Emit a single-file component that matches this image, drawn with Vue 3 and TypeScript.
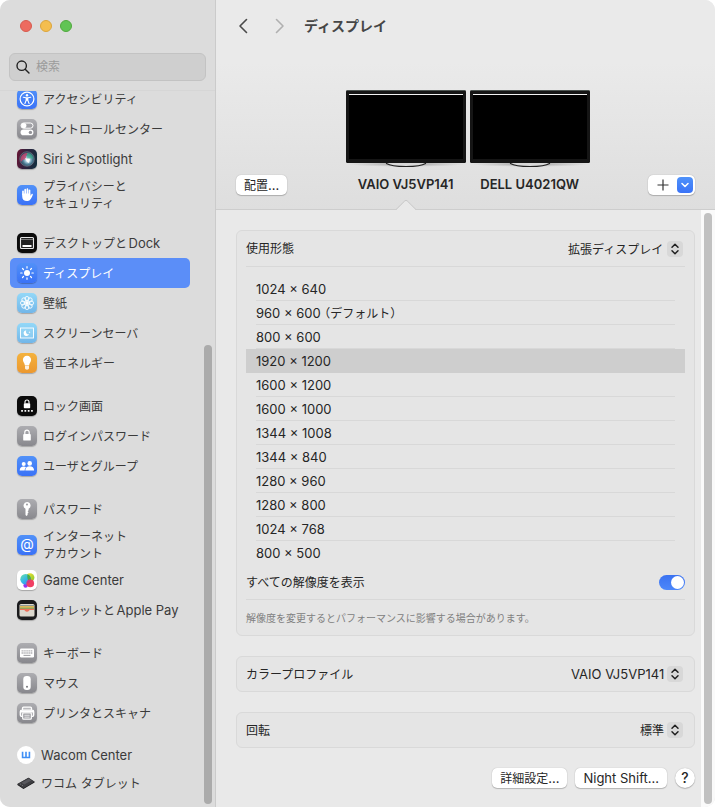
<script setup lang="ts">
import { ref } from 'vue'

interface Run {
  text: string
  japanese: boolean
}

interface NavItem {
  icon: string
  tile: string
  lines: string[]
  small?: boolean
}

const groups: NavItem[][] = [
  [
    { icon: 'access', tile: 'blue', lines: ['アクセシビリティ'] },
    { icon: 'control', tile: 'gray', lines: ['コントロールセンター'] },
    { icon: 'siri', tile: 'siri', lines: ['SiriとSpotlight'] },
    { icon: 'hand', tile: 'blue', lines: ['プライバシーと', 'セキュリティ'] },
  ],
  [
    { icon: 'dock', tile: 'black', lines: ['デスクトップとDock'] },
    { icon: 'display', tile: 'blue', lines: ['ディスプレイ'] },
    { icon: 'wallpaper', tile: 'sky', lines: ['壁紙'] },
    { icon: 'saver', tile: 'sky', lines: ['スクリーンセーバ'] },
    { icon: 'energy', tile: 'orange', lines: ['省エネルギー'] },
  ],
  [
    { icon: 'lockscreen', tile: 'black', lines: ['ロック画面'] },
    { icon: 'login', tile: 'gray', lines: ['ログインパスワード'] },
    { icon: 'users', tile: 'blue', lines: ['ユーザとグループ'] },
  ],
  [
    { icon: 'key', tile: 'gray', lines: ['パスワード'] },
    { icon: 'internet', tile: 'blue', lines: ['インターネット', 'アカウント'] },
    { icon: 'game', tile: 'white', lines: ['Game Center'] },
    { icon: 'wallet', tile: 'wallet', lines: ['ウォレットとApple Pay'] },
  ],
  [
    { icon: 'keyboard', tile: 'gray', lines: ['キーボード'] },
    { icon: 'mouse', tile: 'gray', lines: ['マウス'] },
    { icon: 'printer', tile: 'gray', lines: ['プリンタとスキャナ'] },
  ],
  [
    { icon: 'wacom', tile: 'round', lines: ['Wacom Center'], small: true },
    { icon: 'tablet', tile: 'bare', lines: ['ワコム タブレット'], small: true },
  ],
]

const glyphs: Record<string, string> = {
  access:
    '<circle cx="10" cy="10" r="6.9" fill="none" stroke="#fff" stroke-width="1.2"/><circle cx="10" cy="6.200" r="1.200" fill="#fff"/><path d="M6.300 8.300l2.700.500h2l2.700-.500M9.200 9v2.300l-1.300 3.300M10.800 9v2.300l1.300 3.300M10 9v2.300" fill="none" stroke="#fff" stroke-width="1.100" stroke-linecap="round" stroke-linejoin="round"/>',
  control:
    '<rect x="4" y="4" width="12" height="5.2" rx="2.6" fill="none" stroke="#fff" stroke-width="1"/><circle cx="6.8" cy="6.6" r="2.6" fill="#fff"/><rect x="3.6" y="10.6" width="12.8" height="5.6" rx="2.8" fill="#fff"/><circle cx="13.4" cy="13.4" r="1.7" fill="#929297"/>',
  siri:
    '<defs><radialGradient id="orb" cx=".55" cy=".55" r=".55"><stop offset="0" stop-color="#fff"/><stop offset=".25" stop-color="#b8d8e8"/><stop offset=".6" stop-color="#4b7b92"/><stop offset="1" stop-color="#283a50"/></radialGradient></defs><circle cx="10" cy="10" r="7.3" fill="url(#orb)" stroke="#8b8f9a" stroke-width=".5"/><path d="M3.600 9c1-4 5-5.500 8-4.700C9 6 8 8 10 10c-3 0-5 1-6 3-.6-1-.7-2.500-.4-4z" fill="#d1436d" opacity=".75"/><path d="M10 4c4-.5 6.500 3 6 6-2-1-4-1-6 0 .5-2 0-4 0-6z" fill="#37b08a" opacity=".65"/><path d="M8 9l5 1-1 4-2-1z" fill="#fff" opacity=".9"/>',
  hand:
    '<path d="M6 9.500V6.300M8.200 9V4.700M10.400 9V4.200M12.500 9.500V5.300" stroke="#fff" stroke-width="1.700" stroke-linecap="round"/><path d="M5.200 8.500h8.100v2.300l1.200-1.600c.5-.7 1.600-.2 1.300.6-.7 1.900-1.500 3.700-2.700 5-1 1-1.900 1.300-3.200 1.300-2.800 0-4.700-1.700-4.700-4.600z" fill="#fff"/>',
  dock:
    '<rect x="3.500" y="4.500" width="13" height="11" rx="1" fill="#222" stroke="#e6e6e6" stroke-width="1.100"/><path d="M4 6.500h12" stroke="#999" stroke-width=".7"/><rect x="5.500" y="12" width="9" height="2" fill="#fff"/>',
  display:
    '<circle cx="10" cy="10" r="3" fill="#fff"/><path d="M10 3.700v1.400M10 14.900v1.400M3.700 10h1.400M14.900 10h1.400M5.500 5.500l1 1M13.500 13.500l1 1M5.500 14.500l1-1M13.500 6.500l1-1" stroke="#fff" stroke-width="1.200" stroke-linecap="round"/>',
  wallpaper:
    '<g fill="none" stroke="#fff" stroke-width=".9"><circle cx="10" cy="5.600" r="2.100"/><circle cx="13.100" cy="6.900" r="2.100"/><circle cx="14.400" cy="10" r="2.100"/><circle cx="13.100" cy="13.100" r="2.100"/><circle cx="10" cy="14.400" r="2.100"/><circle cx="6.900" cy="13.100" r="2.100"/><circle cx="5.600" cy="10" r="2.100"/><circle cx="6.900" cy="6.900" r="2.100"/></g><circle cx="10" cy="10" r="1.900" fill="#fff"/>',
  saver:
    '<rect x="3.500" y="5" width="13" height="10" fill="#a5dcf6" fill-opacity=".4" stroke="#fff" stroke-width=".9"/><path d="M9.300 7.200a2.900 2.900 0 1 0 2.800 4.100 2.700 2.700 0 0 1-2.800-4.100z" fill="#fff"/><path d="M12.500 8l.3.900.9.300-.9.300-.3.900-.3-.9-.9-.3.900-.3z" fill="#fff"/>',
  energy:
    '<path d="M10 2.800c-2.500 0-4.100 1.800-4.100 4 0 2.300 1.700 3.100 2 5.700h4.200c.3-2.600 2-3.400 2-5.700 0-2.200-1.600-4-4.100-4z" fill="#fff"/><path d="M8 13h4v2c0 1-.8 1.700-2 1.700S8 16 8 15z" fill="#fff" opacity=".85"/>',
  lockscreen:
    '<rect x="6.800" y="7.300" width="6.400" height="5" rx=".8" fill="#fff"/><path d="M8 7.500V6a2 2 0 0 1 4 0v1.500" fill="none" stroke="#fff" stroke-width="1.100"/><path d="M4.200 14.800h1.700M7.500 14.800h1.700M10.800 14.800h1.700M14.100 14.800h1.700" stroke="#fff" stroke-width="1.700"/>',
  login:
    '<rect x="6.200" y="8" width="7.600" height="6.600" rx=".9" fill="#fff"/><path d="M7.800 8.500V6.300a2.200 2.200 0 0 1 4.400 0v2.200" fill="none" stroke="#fff" stroke-width="1.200"/>',
  users:
    '<circle cx="6.700" cy="7.900" r="2" fill="#fff"/><path d="M2.700 14.400c0-2.600 1.600-4 4-4 1 0 1.800.3 2.400.8-1 .9-1.400 2-1.400 3.200z" fill="#fff"/><circle cx="12.700" cy="7.400" r="2.300" fill="#fff"/><path d="M8.300 14.500c0-2.700 1.800-4.200 4.400-4.200s4.400 1.500 4.400 4.200z" fill="#fff"/>',
  key:
    '<path fill-rule="evenodd" d="M10 3a3.600 3.600 0 0 1 1.600 6.800v1.500l-1 1 1 1-1 1.200v1.500l-1.100.9-1-1V9.800A3.600 3.600 0 0 1 10 3zm0 1.400a1.100 1.100 0 1 0 0 2.200 1.100 1.100 0 0 0 0-2.200z" fill="#fff"/>',
  internet:
    '<text x="10" y="14.200" text-anchor="middle" font-family="Inter, sans-serif" font-size="14" fill="#fff">@</text>',
  game:
    '<defs><linearGradient id="g1" x2=".8" y2="1"><stop stop-color="#6be5a3"/><stop offset=".55" stop-color="#37b8e8"/><stop offset="1" stop-color="#3f86ee"/></linearGradient><linearGradient id="g2" y2="1"><stop stop-color="#ffe52d"/><stop offset="1" stop-color="#7fc62f"/></linearGradient></defs><circle cx="13" cy="7.600" r="4.400" fill="url(#g2)"/><circle cx="8.600" cy="15.600" r="2.200" fill="#9a32ee"/><circle cx="8.600" cy="9.200" r="5.300" fill="url(#g1)"/><path d="M10.500 4.300c2 .6 3.400 2.600 3.400 4.900 0 1.400-.5 2.600-1.300 3.500-1.700-2-2.900-5-2.100-8.400z" fill="#47ad4c"/><circle cx="13.300" cy="13.400" r="3.800" fill="#f13f63"/><path d="M9.600 12.500c.6-1.500 2-2.800 3.800-2.900-.2 2-1.600 3.600-3.800 3.900z" fill="#c83c91"/>',
  wallet:
    '<rect x="2.500" y="4" width="15" height="12.500" rx="1.500" fill="#dcd8ce"/><path d="M3 5h14v1.600H3z" fill="#8d9a94"/><path d="M3 6.300h14v1.400H3z" fill="#f5b53a"/><path d="M3 7.600h14v1.300H3z" fill="#6cae52"/><path d="M3 8.800h14v1.200h-4c-1 0-1.300 1.800-3 1.800S8 10 7 10H3z" fill="#ee705a"/>',
  keyboard:
    '<rect x="3" y="5.500" width="14" height="9" rx="1.300" fill="#fff"/><path d="M4.600 7.800h10.800M4.600 10h10.800" stroke="#a5a5a9" stroke-width="1.300" stroke-dasharray="1.200 .7"/><path d="M6.500 12.400h7" stroke="#a5a5a9" stroke-width="1.100"/>',
  mouse:
    '<rect x="6.300" y="3" width="7.400" height="14" rx="3.300" fill="#fff"/><circle cx="10" cy="13.700" r="1" fill="#77777b"/>',
  printer:
    '<path d="M5.500 7V5.200c0-.6.400-1 1-1h7c.6 0 1 .4 1 1V7M5.600 13.300H4.500c-.7 0-1.200-.5-1.200-1.200V8.800c0-.9.700-1.600 1.600-1.600h10.200c.9 0 1.600.7 1.600 1.600v3.300c0 .7-.5 1.200-1.200 1.200h-1.100" fill="#fff" fill-opacity=".25" stroke="#fff" stroke-width="1.300"/><path d="M3.500 7.500h13v2h-13z" fill="#fff"/><rect x="5.700" y="10" width="8.600" height="6.200" rx=".8" fill="#929297" stroke="#fff" stroke-width="1.200"/><path d="M7.300 12.200h5.400M7.300 14.100h5.400" stroke="#fff" stroke-width=".9"/>',
  wacom:
    '<path d="M6.200 6.500v6.300h7.600V6.500M10 6.500v6.300" fill="none" stroke="#3f8ff5" stroke-width="1.800"/>',
  tablet:
    '<path d="M.5 11.200L12.800 4.300l6.700 4.200v1L7.200 16.800.5 12.200z" fill="#19191b"/><path d="M.5 11.200L12.800 4.300l6.700 4.200L7.200 15.700z" fill="#3e3e42"/><path d="M5 9.600l8-4.400 3 2-8 4.500z" fill="#58585d"/><path d="M3.500 11l1 .7M5.500 12.400l1 .6" stroke="#9a9a9f" stroke-width=".7"/>',
}

const displays = ['VAIO VJ5VP141', 'DELL U4021QW']
const activeDisplay = ref(0)
const activeItem = ref('display')

const resolutions = [
  '1024 × 640',
  '960 × 600 （デフォルト）',
  '800 × 600',
  '1920 × 1200',
  '1600 × 1200',
  '1600 × 1000',
  '1344 × 1008',
  '1344 × 840',
  '1280 × 960',
  '1280 × 800',
  '1024 × 768',
  '800 × 500',
]
const resolution = ref('1920 × 1200')
const showAll = ref(true)

/** Splits a label into Latin and Japanese runs, which are set at different sizes. */
function runs(label: string): Run[] {
  const parts = label.match(/[\u0000-\u00ff]+|[^\u0000-\u00ff]+/g) ?? []
  return parts.map((text) => ({ text, japanese: text.charCodeAt(0) > 0xff }))
}
</script>

<template>
  <div class="window">
    <aside class="sidebar">
      <div class="lights">
        <button class="light close" type="button" aria-label="閉じる"></button>
        <button class="light minimise" type="button" aria-label="しまう"></button>
        <button class="light zoom" type="button" aria-label="拡大"></button>
      </div>
      <label class="search">
        <svg width="14" height="14" viewBox="0 0 14 14" fill="none" stroke="#222" stroke-width="1.4" stroke-linecap="round">
          <circle cx="5.700" cy="5.700" r="4.700" />
          <path d="M9.200 9.200L13 13" />
        </svg>
        <input class="ja" type="search" placeholder="検索" aria-label="検索" />
      </label>
      <div class="scroller">
        <nav class="nav">
          <ul v-for="(group, g) in groups" :key="g" class="group">
            <li v-for="item in group" :key="item.icon">
              <a
                href="#"
                class="item"
                :class="{ active: item.icon === activeItem, double: item.lines.length > 1, small: item.small }"
                @click.prevent="activeItem = item.icon"
              >
                <span class="tile" :class="item.tile">
                  <svg viewBox="0 0 20 20" aria-hidden="true" v-html="glyphs[item.icon]"></svg>
                </span>
                <span class="label">
                  <span v-for="line in item.lines" :key="line" class="line">
                    <span v-for="(run, r) in runs(line)" :key="r" :class="{ ja: run.japanese }">{{ run.text }}</span>
                  </span>
                </span>
              </a>
            </li>
          </ul>
        </nav>
        <div class="side-bar-track"><div class="thumb"></div></div>
      </div>
    </aside>

    <main class="main">
      <header class="header">
        <div class="titlebar">
          <button class="arrow" type="button" aria-label="戻る">
            <svg width="10" height="16" viewBox="0 0 10 16"><path d="M8.500 1.500L2 8l6.500 6.500" fill="none" stroke="#4a4a4a" stroke-width="1.600" stroke-linecap="round" stroke-linejoin="round" /></svg>
          </button>
          <button class="arrow" type="button" aria-label="進む" disabled>
            <svg width="10" height="16" viewBox="0 0 10 16"><path d="M1.500 1.500L8 8l-6.500 6.500" fill="none" stroke="#b0b0b0" stroke-width="1.600" stroke-linecap="round" stroke-linejoin="round" /></svg>
          </button>
          <h1>ディスプレイ</h1>
        </div>
        <div class="arrangement">
          <button class="push" type="button"><span class="ja">配置</span>...</button>
          <div class="displays">
            <button
              v-for="(name, i) in displays"
              :key="name"
              type="button"
              class="display"
              :class="{ current: i === activeDisplay }"
              @click="activeDisplay = i"
            >
              <svg class="monitor" width="120" height="80" viewBox="0 0 120 80" aria-hidden="true">
                <defs>
                  <radialGradient id="shade"><stop stop-color="#777" stop-opacity=".7" /><stop offset="1" stop-color="#999" stop-opacity="0" /></radialGradient>
                </defs>
                <ellipse cx="60" cy="74" rx="60" ry="3" fill="url(#shade)" />
                <path d="M40.500 72v1.500c3 2 10 3 19.500 3s16.500-1 19.500-3V72" fill="#d8d8d8" stroke="#222" stroke-width="1.200" />
                <rect width="120" height="73" rx="1.500" fill="#151515" />
                <path d="M1 .5h118" stroke="#4e5552" />
                <rect x="3" y="4" width="114" height="65" fill="#000" />
                <path d="M3 4.500h114" stroke="#f2f2f2" />
              </svg>
              <span class="name">{{ name }}</span>
              <svg v-if="i === activeDisplay" class="notch" width="20" height="10" viewBox="0 0 20 10" aria-hidden="true">
                <path d="M0 10L8.800.8q1.200-1 2.400 0L20 10z" fill="#e9e9e9" />
                <path d="M0 9.600L8.800.9q1.200-1 2.400 0L20 9.600" fill="none" stroke="#c6c6c6" />
              </svg>
            </button>
          </div>
          <button class="push add" type="button" aria-label="追加">
            <svg width="12" height="12" viewBox="0 0 12 12"><path d="M6 .5v11M.5 6h11" stroke="#333" stroke-width="1.200" /></svg>
            <span class="chevron">
              <svg width="8" height="6" viewBox="0 0 8 6"><path d="M1 1.500l3 3 3-3" fill="none" stroke="#fff" stroke-width="1.500" stroke-linecap="round" stroke-linejoin="round" /></svg>
            </span>
          </button>
        </div>
      </header>

      <div class="body">
        <div class="content">
          <section class="card">
            <div class="row tall">
              <label for="usage"><span class="ja">使用形態</span></label>
              <span class="popup">
                <select id="usage" class="ja"><option>拡張ディスプレイ</option></select>
                <svg class="updown" viewBox="0 0 16 16" aria-hidden="true"><path d="M5 6.300l3-3 3 3M5 9.700l3 3 3-3" /></svg>
              </span>
            </div>
            <ul class="resolutions" aria-label="解像度">
              <li v-for="value in resolutions" :key="value">
                <button
                  type="button"
                  class="resolution"
                  :class="{ chosen: value === resolution }"
                  :aria-pressed="value === resolution"
                  @click="resolution = value"
                >
                  <span class="rule"><span v-for="(run, r) in runs(value)" :key="r" :class="{ ja: run.japanese }">{{ run.text }}</span></span>
                </button>
              </li>
            </ul>
            <div class="row">
              <label for="all"><span class="ja">すべての解像度を表示</span></label>
              <input id="all" v-model="showAll" class="switch" type="checkbox" role="switch" />
            </div>
            <p class="note">解像度を変更するとパフォーマンスに影響する場合があります。</p>
          </section>

          <section class="card">
            <div class="row">
              <label for="profile"><span class="ja">カラープロファイル</span></label>
              <span class="popup">
                <select id="profile"><option>VAIO VJ5VP141</option></select>
                <svg class="updown" viewBox="0 0 16 16" aria-hidden="true"><path d="M5 6.300l3-3 3 3M5 9.700l3 3 3-3" /></svg>
              </span>
            </div>
          </section>

          <section class="card">
            <div class="row">
              <label for="rotation"><span class="ja">回転</span></label>
              <span class="popup">
                <select id="rotation" class="ja"><option>標準</option></select>
                <svg class="updown" viewBox="0 0 16 16" aria-hidden="true"><path d="M5 6.300l3-3 3 3M5 9.700l3 3 3-3" /></svg>
              </span>
            </div>
          </section>

          <div class="actions">
            <button class="push" type="button"><span class="ja">詳細設定</span>...</button>
            <button class="push" type="button">Night Shift...</button>
            <button class="push help" type="button">?</button>
          </div>
        </div>
        <div class="main-track"><div class="thumb"></div></div>
      </div>
    </main>
  </div>
</template>

<style>
body {
  background: #fff;
}
</style>

<style scoped>
* {
  box-sizing: border-box;
}

.window {
  display: grid;
  grid-template-columns: 216px minmax(0, 1fr);
  min-height: 100vh;
  overflow: hidden;
  border-radius: 10px;
  background: #e9e9e9;
  color: #262626;
  font: 13px/16px Inter, "Noto Sans CJK JP", sans-serif;
}

button,
input,
select {
  margin: 0;
  padding: 0;
  border: 0;
  background: none;
  color: inherit;
  font: inherit;
}

ul,
p,
h1 {
  margin: 0;
  padding: 0;
  list-style: none;
}

.ja {
  font-size: 12px;
}

/* Sidebar */
.sidebar {
  display: flex;
  flex-direction: column;
  border-right: 1px solid #cbcbcb;
  background: #dcdcdc;
}

.lights {
  display: flex;
  gap: 8px;
  padding: 20px 20px 0;
}

.light {
  width: 12px;
  height: 12px;
  border: 1px solid;
  border-radius: 50%;
}

.close {
  border-color: #d65b4e;
  background: #ed6b5f;
}

.minimise {
  border-color: #dba53c;
  background: #f4be4f;
}

.zoom {
  border-color: #51a93e;
  background: #61c454;
}

.search {
  display: flex;
  align-items: center;
  gap: 6px;
  height: 28px;
  margin: 21px 9px 9px;
  padding: 0 6px;
  border: 1px solid #c3c3c3;
  border-radius: 6px;
  background: #cfcfcf;
}

.search input {
  flex: 1;
  min-width: 0;
  outline: none;
}

.search input::placeholder {
  color: #9b9b9b;
  opacity: 1;
}

.scroller {
  display: flex;
  flex: 1;
  gap: 14px;
  padding: 0 3px 0 10px;
  overflow: hidden;
  border-top: 1px solid #d6d6d6;
}

.nav {
  flex: 1;
  margin-top: -7px;
}

.group + .group {
  margin-top: 13px;
}

.group:last-child {
  padding-bottom: 8px;
}

.item {
  display: flex;
  align-items: center;
  gap: 6px;
  height: 30px;
  padding: 0 7px;
  border-radius: 5px;
  color: #3b3b3b;
  text-decoration: none;
}

.item.double {
  height: 41px;
}

.item.small {
  height: 28px;
}

.item.active {
  background: #5b8ef8;
  color: #fff;
}

.line {
  display: block;
  text-autospace: normal;
  white-space: nowrap;
}

.tile {
  width: 20px;
  height: 20px;
  border-radius: 5px;
  box-shadow: 0 1px 1px rgba(0, 0, 0, 0.25);
}

.tile svg {
  display: block;
  width: 100%;
  height: 100%;
}

.small .tile {
  width: 18px;
  height: 18px;
}

.blue {
  background: linear-gradient(#5191f8, #3a72f7);
}

.gray {
  background: linear-gradient(#adadb1, #88888d);
}

.black {
  background: #0b0b0b;
}

.sky {
  background: linear-gradient(#93d8f8, #72b6e9);
}

.orange {
  background: linear-gradient(#f4b23e, #ec982f);
}

.white {
  background: #fff;
}

.siri {
  background: linear-gradient(100deg, #6b1534, #33213e 40%, #10303f);
}

.wallet {
  background: #1b1b1d;
}

.round {
  border-radius: 50%;
  background: #fff;
  box-shadow: none;
}

.bare {
  box-shadow: none;
}

.side-bar-track {
  display: grid;
  grid-template-rows: 254fr 459fr 3fr;
  width: 8px;
}

.thumb {
  border-radius: 4px;
  background: #ababab;
}

.side-bar-track .thumb {
  grid-row: 2;
}

/* Header */
.main {
  display: flex;
  flex-direction: column;
}

.header {
  border-bottom: 1px solid #cdcdcd;
  background: linear-gradient(#eaeaea 30%, #dedede);
}

.titlebar {
  display: flex;
  align-items: center;
  gap: 27px;
  height: 52px;
  padding: 0 22px;
}

.arrow {
  display: flex;
}

h1 {
  margin-left: -8px;
  color: #464646;
  font-size: 14px;
  font-weight: 600;
  line-height: 18px;
}

.arrangement {
  display: flex;
  align-items: flex-end;
  justify-content: space-between;
  padding: 38px 20px 14px;
}

.displays {
  display: flex;
  gap: 4px;
}

.display {
  display: flex;
  position: relative;
  flex-direction: column;
  align-items: center;
  gap: 6px;
  width: 120px;
}

.name {
  padding-bottom: 3px;
  font-weight: 600;
  white-space: nowrap;
}

.notch {
  position: absolute;
  bottom: -15px;
  left: calc(50% - 10px);
}

.push {
  height: 20px;
  padding: 0 8px;
  border-radius: 5px;
  background: #fff;
  box-shadow: 0 0 1px rgba(0, 0, 0, 0.3), 0 1px 1px rgba(0, 0, 0, 0.2);
  line-height: 20px;
  white-space: nowrap;
}

.add {
  display: flex;
  align-items: center;
  gap: 8px;
  padding: 0 2px 0 9px;
}

.chevron {
  display: flex;
  align-items: center;
  justify-content: center;
  width: 16px;
  height: 16px;
  border-radius: 4px;
  background: linear-gradient(#4f92fa, #3a73f7);
}

/* Settings */
.body {
  display: flex;
  flex: 1;
}

.content {
  display: flex;
  flex: 1;
  flex-direction: column;
  gap: 20px;
  min-width: 0;
  padding: 20px 6px 18px 20px;
}

.card {
  border: 1px solid #d9d9d9;
  border-radius: 6px;
  background: #e5e5e5;
}

.row {
  display: flex;
  align-items: center;
  justify-content: space-between;
  height: 34px;
  margin: 0 9px;
}

.row.tall {
  height: 35px;
}

.popup {
  display: flex;
  position: relative;
  align-items: center;
}

.popup select {
  padding-right: 20px;
  appearance: none;
  outline: none;
}

.popup select.ja {
  padding-top: 2px;
}

.updown {
  position: absolute;
  right: 2px;
  width: 16px;
  height: 16px;
  border-radius: 4px;
  background: #d8d8d8;
  fill: none;
  pointer-events: none;
  stroke: #222;
  stroke-linecap: round;
  stroke-linejoin: round;
  stroke-width: 1.5px;
}

.resolutions {
  margin: 0 9px;
  padding-top: 10px;
  border-top: 1px solid #d8d8d8;
}

.resolution {
  display: block;
  width: 100%;
  height: 24px;
  padding: 0 10px;
  text-align: left;
}

.rule {
  display: block;
  height: 24px;
  border-bottom: 1px solid #d8d8d8;
  font-feature-settings: "halt";
  line-height: 24px;
}

.chosen {
  background: #cecece;
}

.chosen .rule,
li:last-child .rule {
  border-color: transparent;
}

.switch {
  display: flex;
  align-items: center;
  justify-content: flex-end;
  width: 26px;
  height: 15px;
  padding: 1px;
  border-radius: 8px;
  appearance: none;
  background: #bdbdbd;
}

.switch:checked {
  background: linear-gradient(#3b72f1, #4d88fa);
}

.switch::before {
  width: 13px;
  height: 13px;
  border-radius: 50%;
  background: #fff;
  content: "";
}

.switch:not(:checked) {
  justify-content: flex-start;
}

.note {
  margin: 0 9px;
  padding: 10px 0 9px;
  border-top: 1px solid #d8d8d8;
  color: #808080;
  font-size: 10px;
}

.actions {
  display: flex;
  justify-content: flex-end;
  gap: 8px;
}

.help {
  width: 20px;
  padding: 0;
  border-radius: 50%;
  font-size: 14px;
  font-weight: 500;
}

.main-track {
  display: flex;
  width: 14px;
  padding: 3px;
  background: #fafafa;
}

.main-track .thumb {
  width: 8px;
  background: #c1c1c1;
}
</style>
